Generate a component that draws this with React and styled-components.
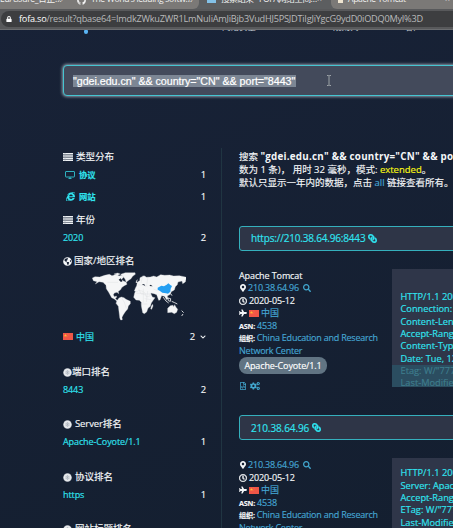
import React from 'react';
import styled, { createGlobalStyle } from 'styled-components';
import {
  FaInternetExplorer, FaGlobeAmericas, FaMapMarkerAlt, FaSearch,
  FaRegClock, FaPlane, FaLink, FaRegFileCode, FaCogs, FaLock, FaGithub, FaChevronDown,
} from 'react-icons/fa';

const Global = createGlobalStyle`
  * { box-sizing: border-box; }
  body { margin: 0; overflow: hidden; background: #162032; }
`;

const Screen = styled.div`
  width: 453px;
  height: 528px;
  overflow: hidden;
  display: flex;
  flex-direction: column;
  background: linear-gradient(160deg, #182237, #141f30);
  color: #f4f6f8;
  font: 9.2px/12px "Open Sans", "Noto Sans CJK SC", sans-serif;
  white-space: nowrap;
  svg { flex: none; }
`;

const TabStrip = styled.div`
  display: flex;
  height: 9px;
  flex: none;
  overflow: hidden;
  background: #5c5e60;
`;
const Tab = styled.div`
  width: ${(p) => p.$w}px;
  height: 9px;
  flex: none;
  display: flex;
  gap: ${(p) => p.$gap || 6}px;
  padding-left: ${(p) => p.$pad}px;
  overflow: hidden;
  background: ${(p) => (p.$active ? '#5c5e60' : '#7b7977')};
  border-radius: 0 0 ${(p) => p.$round || '0 0'};
  color: #f2f2f2;
  font-size: 8.6px;
  line-height: 12px;
  letter-spacing: ${(p) => p.$ls || 0}px;
`;
const TabText = styled.span`
  width: ${(p) => p.$w}px;
  flex: none;
  margin-top: -7px;
`;
const TabIcon = styled.span`
  width: 9px;
  height: 7px;
  margin-top: -4px;
  display: flex;
  background: ${(p) => p.$bg || 'transparent'};
`;
const AddressBar = styled.div`
  height: 21px;
  flex: none;
  padding: 2px 0 2px 1px;
  background: #58595b;
  border-bottom: 1px solid #6b6d70;
`;
const Address = styled.div`
  height: 16px;
  display: flex;
  align-items: center;
  padding-left: 5px;
  gap: 7px;
  border-radius: 8px 0 0 8px;
  background: #3d3e40;
  color: #b9babb;
  font-size: 9.2px;
  letter-spacing: -0.245px;
  b { font-weight: 400; color: #fff; }
`;

const Nav = styled.div`
  height: 5px;
  flex: none;
  display: flex;
  align-items: flex-start;
  padding-left: 84px;
`;
const LogoTip = styled.span`
  width: 4px;
  height: 4px;
  border-radius: 1px 1px 2px 2px;
  background: #5ab4f4;
`;
const NavText = styled.span`
  width: ${(p) => p.$w}px;
  height: 2px;
  margin-left: ${(p) => p.$ml}px;
  overflow: hidden;
  color: #c7ced6;
  font-size: 8.5px;
  line-height: 12px;
  span { display: block; margin-top: -9px; }
`;

const SearchBox = styled.div`
  width: 420px;
  height: 31px;
  flex: none;
  margin: 30px 0 0 63px;
  padding-left: 9px;
  display: flex;
  align-items: center;
  border: 1px solid #45c5d1;
  border-radius: 4px;
  background: #434a5b;
  box-shadow: 0 0 3px 1px rgba(210, 225, 235, 0.6);
`;
const Query = styled.span`
  width: 223px;
  height: 12px;
  background: #7c8694;
  color: #fff;
  font: 10.7px/12px "Liberation Sans", sans-serif;
  letter-spacing: -0.03px;
  -webkit-text-stroke: 0.2px currentColor;
`;
const Beam = styled.svg`
  margin-left: 30px;
`;

const Main = styled.div`
  flex: 1;
  min-height: 0;
  display: flex;
  margin-top: 53px;
  padding-left: 63px;
  -webkit-text-stroke: 0.15px currentColor;
`;
const Sidebar = styled.aside`
  width: 159px;
  flex: none;
  height: 380px;
  margin-top: -1px;
  padding: 0 15px 0 0;
  border-right: 1px solid #203542;
`;
const Heading = styled.div`
  height: 18px;
  margin-top: ${(p) => p.$mt || 0}px;
  display: flex;
  align-items: center;
  gap: ${(p) => (p.$gap === undefined ? 3 : p.$gap)}px;
  font-size: 9.5px;
  letter-spacing: ${(p) => p.$ls || 0}px;
`;
const Item = styled.div`
  height: 17px;
  margin-top: ${(p) => p.$mt || 0}px;
  padding-left: ${(p) => p.$pl || 0}px;
  display: flex;
  align-items: center;
  gap: ${(p) => p.$gap || 4}px;
  color: #30e3f0;
  font-weight: ${(p) => (p.$bold ? 700 : 400)};
  font-size: ${(p) => (p.$bold ? 8.3 : 9)}px;
  letter-spacing: -0.1px;
`;
const Count = styled.span`
  margin-left: auto;
  color: #f4f6f8;
  font-size: 9.4px;
  font-weight: 400;
  display: flex;
  align-items: center;
  gap: 5px;
`;
const MapWrap = styled.div`
  height: 49px;
  margin: 2px 0 0 29px;
  display: flex;
`;

const Content = styled.main`
  width: 300px;
  flex: none;
  padding-left: 17px;
`;
const Summary = styled.div`
  padding-top: 1px;
  font-size: 9.5px;
  line-height: 13.2px;
  p { margin: 0; }
  b { font-size: 9.8px; letter-spacing: 0.24px; -webkit-text-stroke: 0; }
`;
const Mode = styled.span`
  color: #fbf912;
`;
const Link = styled.span`
  color: #45a6d3;
`;
const HostBar = styled.div`
  height: 25px;
  margin-top: ${(p) => p.$mt}px;
  padding-left: 11px;
  display: flex;
  align-items: center;
  gap: 3px;
  border: 1px solid #35b0bd;
  border-radius: 3px;
  background: #2e3547;
  color: #2fe6f2;
  font-size: 10px;
  letter-spacing: ${(p) => p.$ls || 0}px;
  svg { transform: scaleX(-1); stroke: currentColor; stroke-width: 24px; }
`;
const Result = styled.div`
  display: flex;
  margin-top: ${(p) => p.$mt}px;
`;
const Details = styled.div`
  width: 153px;
  flex: none;
  display: flex;
  flex-direction: column;
  padding-top: 1px;
`;
const Line = styled.div`
  height: 12.5px;
  display: flex;
  align-items: center;
  gap: ${(p) => p.$gap || 2}px;
  font-size: 9px;
  letter-spacing: ${(p) => p.$ls || 0}px;
`;
const Small = styled.b`
  font-size: 7.2px;
  font-weight: 700;
  letter-spacing: -0.2px;
`;
const Pill = styled.span`
  width: 88px;
  height: 17px;
  display: flex;
  align-items: center;
  justify-content: center;
  border-radius: 8px;
  background: #617483;
  color: #fff;
  font-size: 9px;
  letter-spacing: -0.12px;
`;
const Tools = styled.div`
  display: flex;
  align-items: center;
  height: 10px;
  gap: 3px;
  margin-top: 7px;
  color: #42a7cf;
`;
const Response = styled.div`
  width: 100px;
  height: 118px;
  padding: ${(p) => p.$pt}px 0 0 8.500px;
  overflow: hidden;
  background: #2f3649;
  color: #2fe6f2;
  font-size: 9.25px;
  line-height: 12.45px;
`;
const Fade = styled.div`
  height: 30px;
  margin: 0 0 0 -8.500px;
  padding-left: 8.500px;
  background: #2b4d60;
  color: #3e7d8d;
  line-height: 12px;
`;

const ListIcon = () => (
  <svg width="10" height="8" viewBox="0 0 10 8" fill="#eef1f4">
    <path d="M0 0h10v1.500H0zM0 2.200h10v1.500H0zM0 4.400h10v1.500H0zM0 6.500h10V8H0z" />
    <path d="M2 0v8" stroke="#9aa2ad" strokeWidth=".5" />
  </svg>
);
const Monitor = () => (
  <svg width="10" height="8" viewBox="0 0 20 16" fill="none" stroke="#33cbd8" strokeWidth="1.7">
    <rect x="1" y="1" width="18" height="11" rx="1" /><path d="M7 15h6M10 12v3" />
  </svg>
);
const Flag = () => (
  <svg width="10" height="7" viewBox="0 0 20 14">
    <rect width="20" height="14" fill="#ef5647" />
    <path d="M5 2l1 2h2L6.500 5.500l.6 2L5 6.300 3 7.500l.5-2L2 4h2z" fill="#ffbd32" />
    <path d="M9 2h1M11 4h1M9 7h1" stroke="#f6a238" />
  </svg>
);
const Ball = () => (
  <svg width="9" height="9" viewBox="0 0 18 18">
    <circle cx="9" cy="9" r="8.500" fill="#d5d9de" />
    <path d="M4 5l10 8M14 5L4 13M9 3v12" stroke="#a3abb5" />
    <circle cx="9" cy="9" r="6" fill="none" stroke="#fff" strokeWidth="1.300" />
  </svg>
);
const IBeam = () => (
  <Beam width="6" height="11" viewBox="0 0 6 11" fill="none" stroke="#9da3a7">
    <path d="M1 .5h1.500L3 1l.5-.5H5M3 1v9M1 10.500h1.500L3 10l.5.5H5" />
  </Beam>
);
const WorldMap = () => (
  <svg width="94" height="49" viewBox="124 80 282 147" fill="#f5f6f7" stroke="#d4d8dc" strokeWidth="1">
    <path d="M125 98l8-4 14 1 15-5 14-3 8 4 14-4 7 5 10-3 5 5-7 8 5 5 8 3 3 7-8 4-7 5-5 8-6 4 1 7-5-4-8 2-3 5 3 6 6-2 1 4-4 3 5 6 7 2 1 3-8-2-8-7-8-4-5-9-4-7-7-11-1-10-9-9-12-2-11 7 5-7-11-3z" />
    <path d="M210 87l14-5 29 0 1 5-8 6-5 7-9 6-5 5-4-10-5-7zM190 86l11-3 8 3-8 4z" />
    <path d="M205 158l7-3 8 2 6 5 13 6 0 7-6 7-2 9-7 8-6 9-4 8 1 7-5 1-3-9-2-16-2-16-7-9 3-8z" />
    <path d="M252 143l5-10 13-4 13 2 8 4 6 2 8 18 8 2-5 7-6 9-3 10-7 6-4 11-7 5-5-3-4-20 0-11-6-6-10-1-7-8zM302 182l4-5 1 5-4 10-3-1z" />
    <path d="M258 121l2-11 7-4 1-9 12-6 8 5 11-1 10-3 9 3 12-7 12 2 15-1 12 3 17-1 18 4 14 1-2 5-10 1-2 8-8 5-2-8-12 3-2 8-6 6-3 10-9 5-3 8-9 5 2 8-4 3-7-10-8-2-5 13-4 1-6-17-8-3-10-2-2 9-10 2-6-12-8-5-10-2-4 4-9-2 3-8z" />
    <path d="M351 189l8-8 8-1 2 4 3-6 4 8 5 6-3 9-7 4-8-4-12 1z" />
    <path d="M337 155l9 12 8 6M352 158l8 2-1 8-6-2zM360 145l4 6M363 168l9 4 8 4M361 130l8-4 2-7M260 103l-4 8 4 1M393 196l6 6M397 206l-4 6M207 218l6 5" fill="none" stroke="#f5f6f7" strokeWidth="2.500" />
    <path d="M210 99l6 8-5 3-7-7zM273 116l8 1 3 6M296 122l4-4 6 5" fill="#162032" stroke="none" />
    <path d="M170 111h32M264 130l7 16h28M278 130v42M291 137l-4 33M257 144h20l12 12M213 158l8 13 6 18M276 91l-5 22M292 94l-4 26M262 118l29 4M308 131l13 5M270 176h20M282 160l19 3" fill="none" />
    <path d="M321 127l11-6 8 2 8-5 5-4 7 6 4 2-4 8-1 9-7 6-6-1-11-2-8-6-6-3z" fill="#249ff2" stroke="none" />
  </svg>
);

function HostDetails({ title }) {
  return (
    <Details>
      {title && <Line $ls={-0.1}>{title}</Line>}
      <Line $ls={-0.2} $gap={1}><FaMapMarkerAlt size={8} /><Link>210.38.64.96</Link>&nbsp;<FaSearch size={8} color="#42a7cf" /></Line>
      <Line $gap={2} $ls={-0.12}><FaRegClock size={8} stroke="currentColor" strokeWidth="30" />2020-05-12</Line>
      <Line><FaPlane size={8} /><Flag /><Link>中国</Link></Line>
      <Line $ls={-0.12}><Small>ASN:</Small><Link>4538</Link></Line>
      <Line $ls={-0.22}><Small>组织:</Small><Link>China Education and Research</Link></Line>
      <Line $ls={-0.22}><Link>Network Center</Link></Line>
    </Details>
  );
}

export default function App() {
  return (
    <Screen>
      <Global />
      <TabStrip>
        <Tab $w={70} $pad={0} $gap={6} $ls={-0.3}><TabText $w={52}>EdAssure_日正…</TabText><TabText $w={8}>×</TabText></Tab>
        <Tab $w={129} $pad={7} $gap={5} $ls={-0.32} $round="6px 0"><TabIcon><FaGithub size={9} /></TabIcon><TabText $w={92}>The World's leading softw…</TabText><TabText $w={8}>×</TabText></Tab>
        <Tab $active $w={132} $pad={8} $gap={5} $ls={-0.5}><TabIcon $bg="#83c1e7" /><TabText $w={91}>搜索结果 - FOFA网络空间…</TabText><TabText $w={8}>×</TabText></Tab>
        <Tab $w={122} $pad={7} $gap={5} $ls={-0.3} $round="0 6px"><TabIcon $bg="#eee4d0" /><TabText $w={92}>Apache Tomcat</TabText><TabText $w={8}>×</TabText></Tab>
      </TabStrip>
      <AddressBar>
        <Address>
          <FaLock size={6} color="#fff" />
          <span><b>fofa.so</b>/result?qbase64=ImdkZWkuZWR1LmNuIiAmJiBjb3VudHJ5PSJDTiIgJiYgcG9ydD0iODQ0MyI%3D</span>
        </Address>
      </AddressBar>
      <Nav>
        <LogoTip />
        <NavText $ml={134} $w={34}><span>网络安全</span></NavText>
        <NavText $ml={77} $w={30}><span>规则列</span></NavText>
        <NavText $ml={42} $w={25}><span>客户</span></NavText>
      </Nav>
      <SearchBox>
        <Query>"gdei.edu.cn" &amp;&amp; country="CN" &amp;&amp; port="8443"</Query>
        <IBeam />
      </SearchBox>
      <Main>
        <Sidebar>
          <Heading><ListIcon />类型分布</Heading>
          <Item $bold $pl={2}><Monitor />协议<Count>1</Count></Item>
          <Item $bold $pl={3} $mt={5}><FaInternetExplorer size={9} />网站<Count>1</Count></Item>
          <Heading $mt={6}><ListIcon />年份</Heading>
          <Item>2020<Count>2</Count></Item>
          <Heading $mt={6} $gap={2}><FaGlobeAmericas size={9} />国家/地区排名</Heading>
          <MapWrap><WorldMap /></MapWrap>
          <Item $mt={7} $gap={3}><Flag />中国<Count>2 <FaChevronDown size={6} /></Count></Item>
          <Heading $mt={18} $gap={0}><Ball />端口排名</Heading>
          <Item>8443<Count>2</Count></Item>
          <Heading $mt={17} $ls={-0.1}><Ball />Server排名</Heading>
          <Item>Apache-Coyote/1.1<Count>1</Count></Item>
          <Heading $mt={18}><Ball />协议排名</Heading>
          <Item>https<Count>1</Count></Item>
          <Heading $mt={17}><Ball />网站标题排名</Heading>
        </Sidebar>
        <Content>
          <Summary>
            <p>搜索 <b>"gdei.edu.cn" &amp;&amp; country="CN" &amp;&amp; port="8443"</b></p>
            <p>数为 1 条)， 用时 32 毫秒，模式: <Mode>extended</Mode>。</p>
            <p>默认只显示一年内的数据，点击 <Link>all</Link> 链接查看所有。</p>
          </Summary>
          <HostBar $mt={36} $ls={-0.18}>https://210.38.64.96:8443<FaLink size={9} /></HostBar>
          <Result $mt={18}>
            <div>
              <HostDetails title="Apache Tomcat" />
              <Pill>Apache-Coyote/1.1</Pill>
              <Tools><FaRegFileCode size={8} /><FaCogs size={10} /></Tools>
            </div>
            <Response $pt={22}>
              HTTP/1.1 200 OK<br />Connection: close<br />Content-Length: 11250<br />Accept-Ranges: bytes<br />Content-Type: text/html<br />Date: Tue, 12 May 2020
              <Fade>Etag: W/"7777-15"<br />Last-Modified: Tue</Fade>
            </Response>
          </Result>
          <HostBar $mt={24} $ls={-0.1}>210.38.64.96<FaLink size={9} /></HostBar>
          <Result $mt={18}>
            <HostDetails />
            <Response $pt={9}>
              HTTP/1.1 200 OK<br />Server: Apache-Coyote/1.1<br />Accept-Ranges: bytes<br />ETag: W/"7777-15"<br />Last-Modified: Tue
            </Response>
          </Result>
        </Content>
      </Main>
    </Screen>
  );
}
